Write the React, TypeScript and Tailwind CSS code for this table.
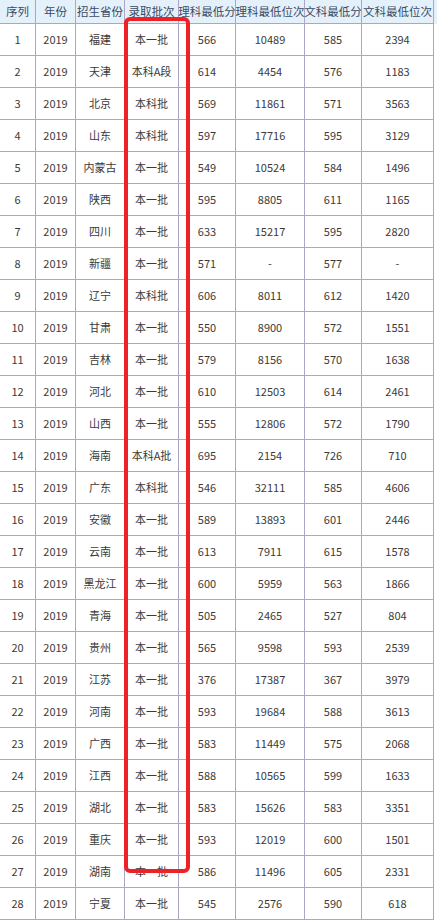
const headers = ['序列', '年份', '招生省份', '录取批次', '理科最低分', '理科最低位次', '文科最低分', '文科最低位次'];

const rows: string[][] = [
  ['1', '2019', '福建', '本一批', '566', '10489', '585', '2394'],
  ['2', '2019', '天津', '本科A段', '614', '4454', '576', '1183'],
  ['3', '2019', '北京', '本科批', '569', '11861', '571', '3563'],
  ['4', '2019', '山东', '本科批', '597', '17716', '595', '3129'],
  ['5', '2019', '内蒙古', '本一批', '549', '10524', '584', '1496'],
  ['6', '2019', '陕西', '本一批', '595', '8805', '611', '1165'],
  ['7', '2019', '四川', '本一批', '633', '15217', '595', '2820'],
  ['8', '2019', '新疆', '本一批', '571', '-', '577', '-'],
  ['9', '2019', '辽宁', '本科批', '606', '8011', '612', '1420'],
  ['10', '2019', '甘肃', '本一批', '550', '8900', '572', '1551'],
  ['11', '2019', '吉林', '本一批', '579', '8156', '570', '1638'],
  ['12', '2019', '河北', '本一批', '610', '12503', '614', '2461'],
  ['13', '2019', '山西', '本一批', '555', '12806', '572', '1790'],
  ['14', '2019', '海南', '本科A批', '695', '2154', '726', '710'],
  ['15', '2019', '广东', '本科批', '546', '32111', '585', '4606'],
  ['16', '2019', '安徽', '本一批', '589', '13893', '601', '2446'],
  ['17', '2019', '云南', '本一批', '613', '7911', '615', '1578'],
  ['18', '2019', '黑龙江', '本一批', '600', '5959', '563', '1866'],
  ['19', '2019', '青海', '本一批', '505', '2465', '527', '804'],
  ['20', '2019', '贵州', '本一批', '565', '9598', '593', '2539'],
  ['21', '2019', '江苏', '本一批', '376', '17387', '367', '3979'],
  ['22', '2019', '河南', '本一批', '593', '19684', '588', '3613'],
  ['23', '2019', '广西', '本一批', '583', '11449', '575', '2068'],
  ['24', '2019', '江西', '本一批', '588', '10565', '599', '1633'],
  ['25', '2019', '湖北', '本一批', '583', '15626', '583', '3351'],
  ['26', '2019', '重庆', '本一批', '593', '12019', '600', '1501'],
  ['27', '2019', '湖南', '本一批', '586', '11496', '605', '2331'],
  ['28', '2019', '宁夏', '本一批', '545', '2576', '590', '618'],
];

const grid = 'grid grid-cols-[36px_40px_49px_54px_57px_69px_57px_72px]';

export default function App() {
  return (
    <div className="relative w-[437px] h-[920px] overflow-hidden bg-white font-['Noto_Sans_CJK_SC','Noto_Sans',sans-serif]">
      <div className={`${grid} bg-[#e4f1fa] text-[11.5px] text-[#3b4a63]`}>
        {headers.map((h) => (
          <div
            key={h}
            className="h-[24px] flex items-center justify-center whitespace-nowrap overflow-visible border-r border-b border-[#aaa6c8] leading-none"
          >
            {h}
          </div>
        ))}
      </div>

      {rows.map((r) => (
        <div key={r[0]} className={`${grid} text-[11px] text-[#3a3a3a]`}>
          {r.map((c, i) => (
            <div
              key={i}
              className="h-[32px] flex items-center justify-center whitespace-nowrap border-r border-b border-[#aaa6c8] leading-none"
            >
              {c}
            </div>
          ))}
        </div>
      ))}

      {/* red highlight around the 录取批次 column */}
      <div className="absolute left-[124px] top-[17px] w-[66px] h-[856px] border-[4px] border-[#ec2226] rounded-[6px] pointer-events-none" />
    </div>
  );
}
